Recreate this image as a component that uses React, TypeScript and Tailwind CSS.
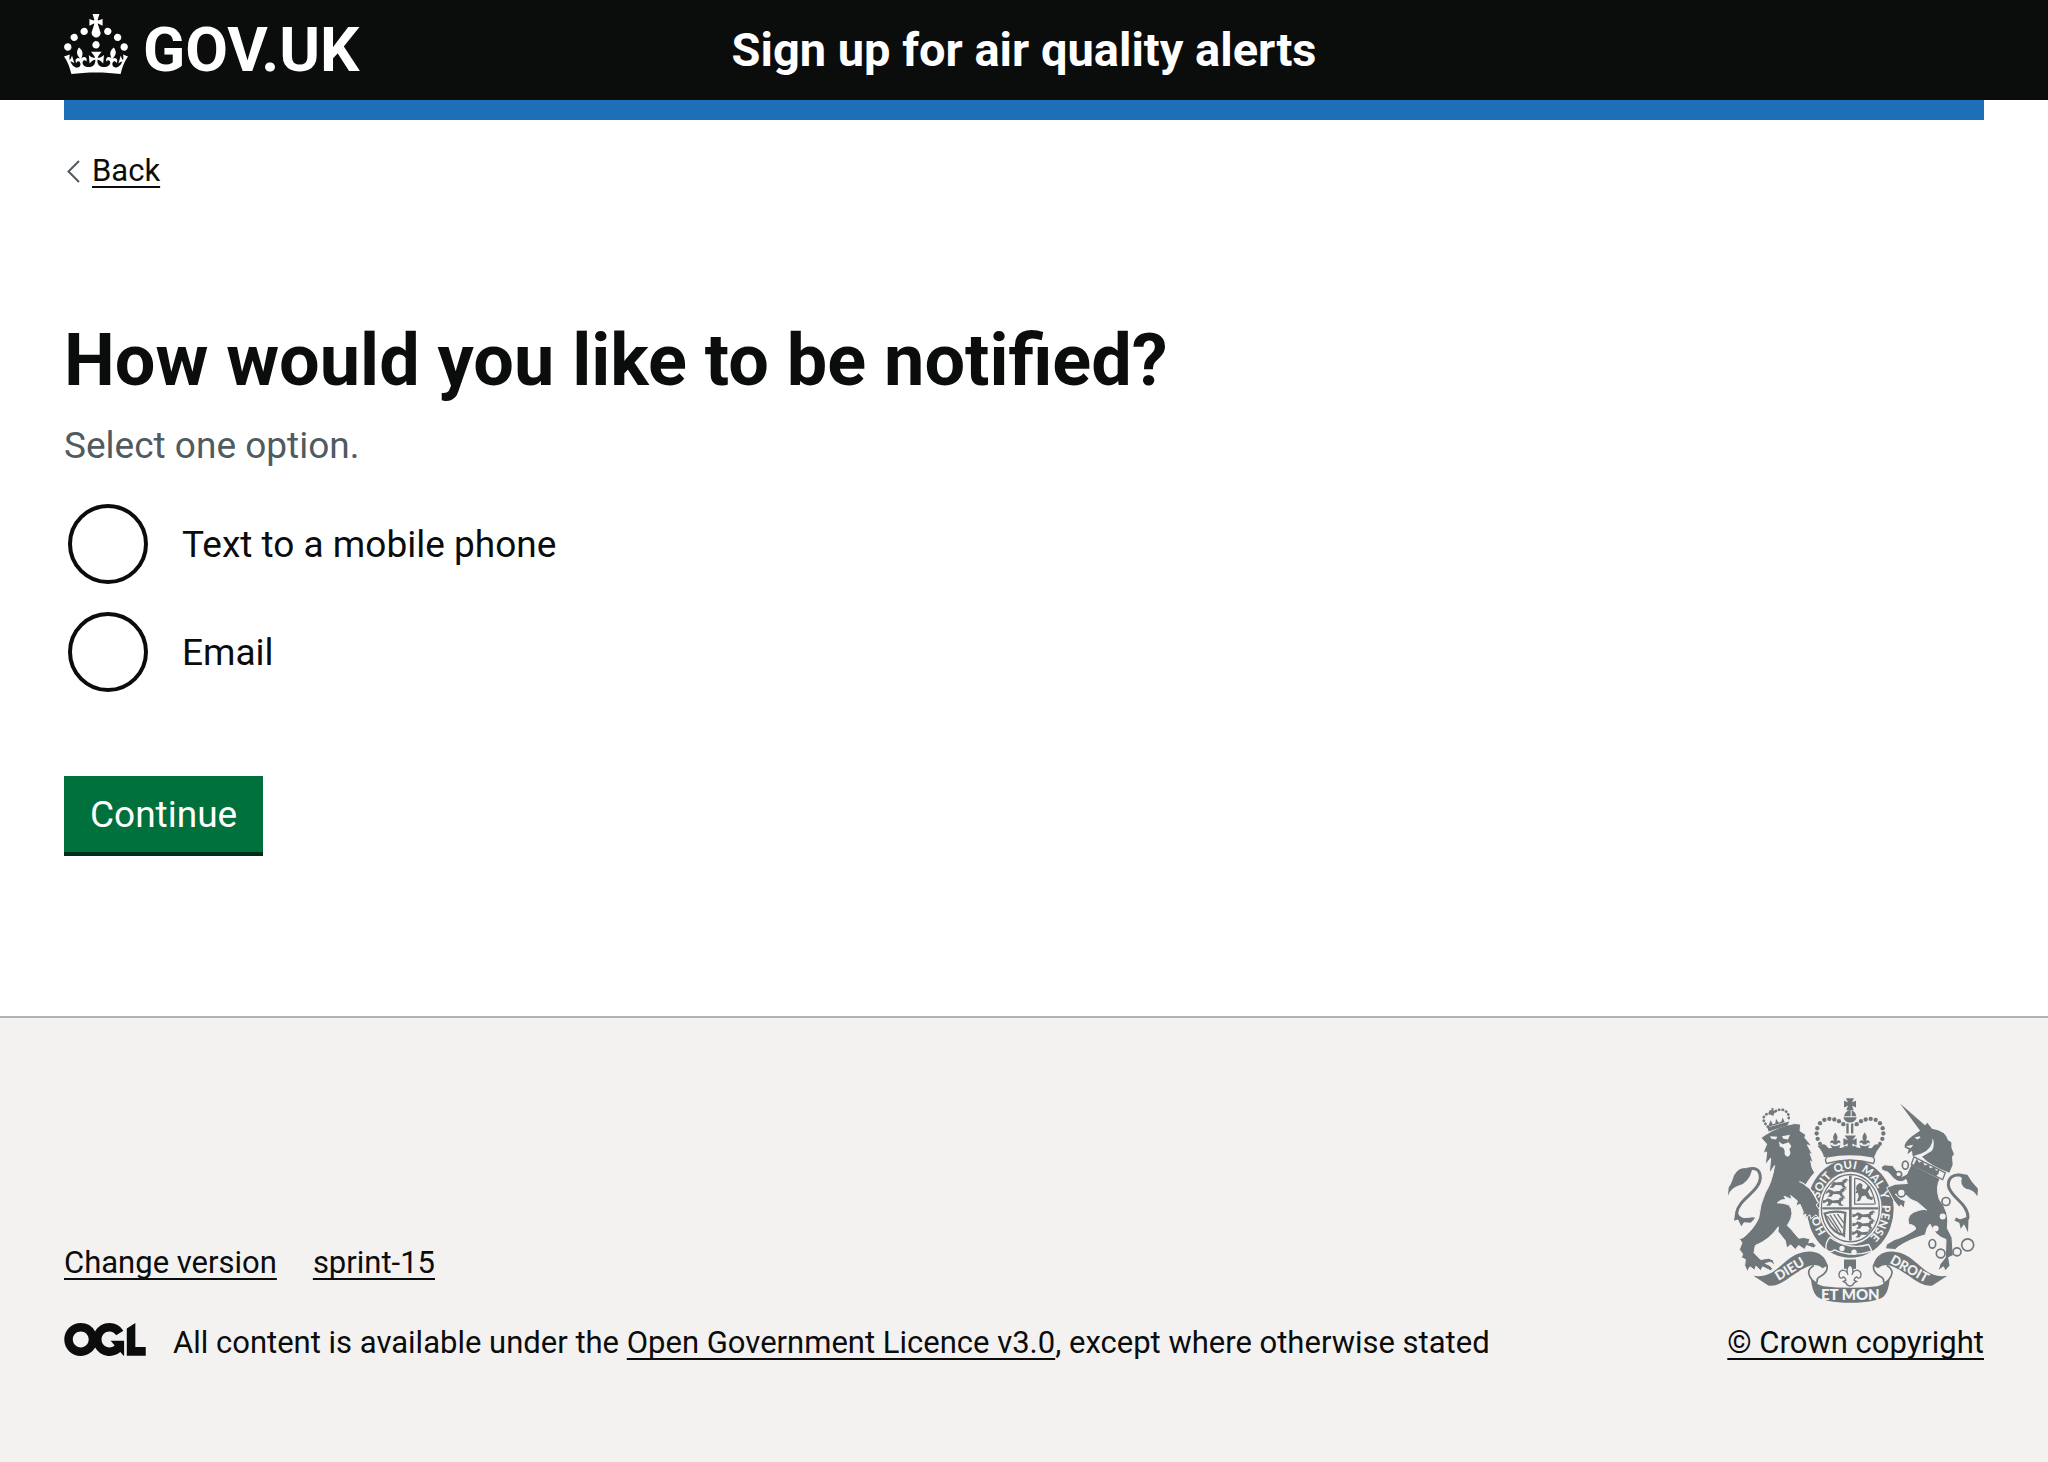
import React from 'react';

const GREY = '#6f777b';
const PAPER = '#f3f2f1';

function Crown() {
  return (
    <svg className="mb-3 h-[60px] w-16 shrink-0" viewBox="0 0 32 30" fill="currentColor" aria-hidden="true">
      <path d="M22.6 10.4c-1 .4-2-.1-2.4-1-.4-.9.1-2 1-2.4.9-.4 2 .1 2.4 1s-.1 2-1 2.4m-5.9 6.7c-.9.4-2-.1-2.4-1-.4-.9.1-2 1-2.4.9-.4 2 .1 2.4 1s-.1 2-1 2.4m10.8-3.7c-1 .4-2-.1-2.4-1-.4-.9.1-2 1-2.4.9-.4 2 .1 2.4 1s0 2-1 2.4m3.3 4.8c-1 .4-2-.1-2.4-1-.4-.9.1-2 1-2.4.9-.4 2 .1 2.4 1s-.1 2-1 2.4M17 4.7l2.3 1.2V2.5l-2.3.7-.2-.2.9-3h-3.4l.9 3-.2.2c-.1.1-2.3-.7-2.3-.7v3.4L15 4.7c.1.1.1.2.2.2l-1.3 4c-.1.2-.1.4-.1.6 0 1.1.8 2 1.9 2.2h.7c1-.2 1.9-1.1 1.9-2.1 0-.2 0-.4-.1-.6l-1.3-4c-.1-.2 0-.2.1-.3m-7.6 5.7c.9.4 2-.1 2.4-1 .4-.9-.1-2-1-2.4-.9-.4-2 .1-2.4 1s0 2 1 2.4m-5 3c.9.4 2-.1 2.4-1 .4-.9-.1-2-1-2.4-.9-.4-2 .1-2.4 1s.1 2 1 2.4m-3.2 4.8c.9.4 2-.1 2.4-1 .4-.9-.1-2-1-2.4-.9-.4-2 .1-2.4 1s0 2 1 2.4m14.8 11c4.4 0 8.6.3 12.3.8 1.1-4.5 2.4-7 3.7-8.8l-2.5-.9c.2 1.3.3 1.9 0 2.7-.4-.4-.8-1.1-1.1-2.3l-1.2 4c.7-.5 1.3-.8 2-.9-1.1 2.5-2.6 3.1-3.5 3-1.1-.2-1.7-1.2-1.5-2.1.3-1.2 1.5-1.5 2.1-.1 1.1-2.3-.8-3-2-2.3 1.9-1.9 2.1-3.5.6-5.6-2.1 1.6-2.1 3.2-1.2 5.5-1.2-1.4-3.2-.6-2.5 1.6.9-1.4 2.1-.5 1.9.8-.2 1.1-1.7 2.1-3.5 1.9-2.7-.2-2.9-2.1-2.9-3.6.7-.1 1.9.5 2.9 1.9l.4-4.3c-1.1 1.1-2.1 1.4-3.2 1.4.4-1.2 2.1-3 2.1-3h-5.4s1.7 1.9 2.1 3c-1.1 0-2.1-.2-3.2-1.4l.4 4.3c1-1.4 2.2-2 2.9-1.9-.1 1.5-.2 3.4-2.9 3.6-1.9.2-3.4-.8-3.5-1.9-.2-1.3 1-2.2 1.9-.8.7-2.3-1.2-3-2.5-1.6.9-2.2.9-3.9-1.2-5.5-1.5 2-1.3 3.7.6 5.6-1.2-.7-3.1 0-2 2.3.6-1.4 1.8-1.1 2.1.1.2.9-.3 1.9-1.5 2.1-.9.2-2.4-.5-3.5-3 .6 0 1.2.3 2 .9l-1.2-4c-.3 1.1-.7 1.9-1.1 2.3-.3-.8-.2-1.4 0-2.7l-2.9.9C1.3 23 2.6 25.5 3.7 30c3.7-.5 7.9-.8 12.3-.8" />
    </svg>
  );
}

function OglLogo() {
  return (
    <svg className="h-[33px] w-[82px] shrink-0" viewBox="0 0 483.2 195.7" fill="currentColor" aria-hidden="true">
      <path d="M421.5 142.8V.1l-50.7 32.3v161.1h112.4v-50.7zm-122.3-9.6A47.12 47.12 0 0 1 221 97.8c0-26 21.1-47.1 47.1-47.1 16.7 0 31.4 8.7 39.7 21.8l42.7-27.2A97.63 97.63 0 0 0 268.1 0c-36.5 0-68.3 20.1-85.1 49.7A98 98 0 0 0 97.8 0C43.9 0 0 43.9 0 97.8s43.9 97.8 97.8 97.8c36.5 0 68.3-20.1 85.1-49.7a97.76 97.76 0 0 0 149.6 25.4l19.4 22.2h3v-87.8h-80l24.3 27.5zM97.8 145c-26 0-47.1-21.1-47.1-47.1s21.1-47.1 47.1-47.1 47.1 21.1 47.1 47.1S123.8 145 97.8 145" />
    </svg>
  );
}

const crownPearls = [
  [323, 160], [320, 144], [322, 128], [330, 113], [343, 103], [358, 100], [373, 102], [387, 107], [400, 116],
];

function CrownHalf() {
  return (
    <>
      {crownPearls.map(([x, y]) => (
        <circle key={`${x}-${y}`} cx={x} cy={y} r="6.5" />
      ))}
      <circle cx="330" cy="175" r="6" />
      {/* fleur-de-lis */}
      <path d="M376 141c7 9 9 16 3 25 8-5 14 0 12 8-3-4-8-3-10 3h-10c-2-6-7-7-10-3-2-8 4-13 12-8-6-9-4-16 3-25z" />
    </>
  );
}

function Ribbon() {
  return (
    <>
      <path d="M130 571Q162 575 186 561C225 536 245 499 298 498Q342 499 353 540L338 548Q322 534 300 541C268 552 240 577 214 592Q194 603 175 600Z" />
      <path
        d="M351 538Q355 560 332 572Q318 578 322 590M312 540Q296 548 296 562Q300 584 322 594"
        fill="none"
        stroke={GREY}
        strokeWidth="5"
      />
    </>
  );
}

/* One walking lion of the English quarters */
function Passant({ x, y }: { x: number; y: number }) {
  return (
    <g transform={`translate(${x} ${y}) scale(1.4 1.2)`}>
      <path d="M4 5l5-5 6 3 5 3 14-2V0l8-4 6 5-6 0 1 4-5 2v7l6 5h-9l-4-6-12-1-5 7h-8l5-6-2-5-8 5-6-3 5-3-5-3z" />
    </g>
  );
}

function RoyalArms() {
  return (
    <svg className="mr-1.5 h-[205px] w-[250px]" viewBox="54 38 750 614" fill={GREY} aria-hidden="true">
      <defs>
        <path id="motto-ring" d="M421 482A105 117 0 0 1 421 249A105 117 0 0 1 421 482" />
        <clipPath id="arms">
          <ellipse cx="421" cy="368" rx="84" ry="98" />
        </clipPath>
      </defs>

      {/* Garter */}
      <ellipse cx="421" cy="369" rx="130" ry="148" />
      <ellipse cx="421" cy="368" rx="94" ry="109" fill={PAPER} />
      <ellipse cx="421" cy="368" rx="87" ry="101" fill="none" stroke={GREY} strokeWidth="4" />
      <g clipPath="url(#arms)">
        <path d="M417 264h8v208h-8zM330 365h182v7H330z" />
        <Passant x={350} y={284} />
        <Passant x={344} y={311} />
        <Passant x={340} y={338} />
        <Passant x={430} y={380} />
        <Passant x={430} y={407} />
        <Passant x={428} y={433} />
        <path d="M434 278v78h60" fill="none" stroke={GREY} strokeWidth="4" />
        <path d="M434 278q50 5 62 78" fill="none" stroke={GREY} strokeWidth="4" />
        <path d="M440 300l10-8 8 6-2 10 10 4 8-12 8 4-8 14 6 14 10 4-4 8-14-4-6-10-10 2-6 14-10 2 6-14-2-12-8 2 4-10-2-6z" />
        <path d="M344 384q30-10 62-2l-4 68q-8-6-12-4-34-14-46-62z" fill="none" stroke={GREY} strokeWidth="7" />
        <path d="M360 388l34 54M371 386l27 42M382 385l20 28M352 392l32 46" fill="none" stroke={GREY} strokeWidth="4" />
      </g>
      <g fill={PAPER} fontFamily="Lato, sans-serif" fontWeight="900" fontSize="34">
        <text>
          <textPath href="#motto-ring" startOffset="13%">HO</textPath>
        </text>
        <text>
          <textPath href="#motto-ring" startOffset="29%">SOIT</textPath>
        </text>
        <text>
          <textPath href="#motto-ring" startOffset="43%">QUI</textPath>
        </text>
        <text>
          <textPath href="#motto-ring" startOffset="55%">MAL</textPath>
        </text>
        <text>
          <textPath href="#motto-ring" startOffset="68%">Y</textPath>
        </text>
        <text>
          <textPath href="#motto-ring" startOffset="74%">PENSE</textPath>
        </text>
      </g>

      {/* Buckle and strap */}
      <path d="M360 455q-14 14-12 36 12 14 26 2 50 24 112 4l-10-20q-52 16-104-14z" stroke={PAPER} strokeWidth="4" />
      <circle cx="396" cy="489" r="8" fill={PAPER} />
      <circle cx="432" cy="500" r="8" fill={PAPER} />

      {/* Crown */}
      <CrownHalf />
      <g transform="matrix(-1 0 0 1 840 0)">
        <CrownHalf />
      </g>
      <path d="M408 38h24l-6 12 12-4v20l-12-5 5 13h-22l5-13-12 5V46l12 4z" />
      <path d="M417 74h5v18h-20q3-14 15-18zM425 74q12 4 14 18h-14zM400 95h40q-3 15-20 16-17-1-20-16z" />
      <path d="M409 114h7v30h-7zM423 114h7v30h-7z" />
      <path d="M404 150h34l-11 14 13-6v22l-14-6 4 16h-20l4-16-14 6v-22l14 6z" />
      <path d="M328 181q10-9 20-2 6 12 18 8l-6-10q16 10 32 0l-4 10q12 2 18-7 14 12 28 0 6 9 18 7l-4-10q16 10 32 0l-6 10q12 4 18-8 10-7 20 2-14 16-20 34-75-16-150 0-4-18-20-34z" />
      <path d="M352 214q68-14 136 0 10 8 2 20-70-22-140 0-8-12 2-20z" fill={PAPER} stroke={GREY} strokeWidth="4" />

      {/* Lion */}
      <path
        stroke={PAPER}
        strokeWidth="3"
        d="M166 148L153 157L170 176L160 200L170 200L166 238L182 218L178 264L194 240Q186 290 166 322Q150 356 146 398Q130 432 100 456L88 460L96 472L88 492L98 506L94 516L106 522L104 540L112 558L120 544L134 554L138 542L152 556L158 544L182 556L188 550L180 540L166 534L182 530L194 540L190 524L176 518L152 522L132 502L136 480Q180 462 205 424L204 438L226 466L230 488L242 478L256 492L266 480L284 492L290 480L312 488L318 480L308 470L296 472L300 460L282 456L266 458L244 432L232 420Q258 380 236 358Q220 352 202 352Q212 340 228 342L222 332L246 342L242 330L262 346L258 362L270 356L280 380L276 390L288 386L284 398L300 388L302 400L318 388L328 400L328 372L318 358L326 352L308 322Q300 304 286 300Q306 268 314 262Q304 248 302 226L310 232L300 204L308 208L292 178L306 182L284 156L288 148L270 136L272 116L254 114Q204 122 166 148Z"
      />
      <path d="M268 288Q298 300 312 326L324 350" fill="none" stroke={PAPER} strokeWidth="4" />
      <path d="M180 152l22 2-4 8-14-2zM216 152l24-4-6 14-14-2zM206 168l12 8 18-6 8 12-6 10q8 14-4 22-12-2-10-16 0-12-14-14z" fill={PAPER} />
      {/* Lion's crown */}
      <path d="M172 126l66-18-6 12-56 18zM182 104l6 12 8-2 2-14 8 12 8-4 4-12 6 14-50 14z" />
      <path d="M178 74l7 0-1-7 7 2-1 7 7 0v6l-7 0 1 8-7 0-1-8-6 0z" />
      <path d="M174 124q-20-20-10-34 12-10 24-4M188 84q16-16 34-10 20 10 12 34" fill="none" stroke={GREY} strokeWidth="8" strokeDasharray="1 10" strokeLinecap="round" />
      {/* Lion's tail */}
      <path d="M110 252Q150 240 151 276C150 318 86 340 80 382Q84 410 130 400" fill="none" stroke={GREY} strokeWidth="9" />
      <path d="M54 330L56 306Q64 296 72 270Q86 246 108 248L126 254Q116 292 86 300Q64 306 54 330ZM76 380L72 406L84 402L94 422L102 410L122 412L136 396L96 398Z" />

      {/* Unicorn */}
      <path d="M570 54L650 124L632 138Z" />
      <path d="M652 112L666 130Q706 136 714 164L724 170L724 186L732 206L726 214L728 238L718 262Q660 240 636 214L666 196Q676 176 668 158Q668 190 634 204L608 212L606 196L592 206L596 192L584 186Q580 172 606 152L632 134Z" />
      <path d="M614 156l14-4 4 4-10 6zM588 182l22-4-8 10z" fill={PAPER} />
      <path
        stroke={PAPER}
        strokeWidth="3"
        d="M604 236L690 280Q676 306 688 342Q720 380 712 428L726 456L730 510L716 516L720 540L706 556L700 544L684 556L690 536L706 516L708 462Q676 452 660 416Q650 424 646 448Q596 462 562 486L556 492L526 490L530 476L554 462Q580 456 616 432Q620 420 596 416Q586 384 628 374Q646 370 650 374L622 350Q600 344 590 330L556 326L570 340L586 346L582 368L572 358L568 366L552 346L530 306L556 296L592 294L588 282Q570 296 552 280L534 260L516 254L514 244L524 238L548 240L574 274L590 266Z"
      />
      <path d="M612 214L706 262L698 282L604 236Z" fill={PAPER} stroke={GREY} strokeWidth="4" />
      <path d="M620 220l8 12 10-6 6 14 12-4 4 12 14-4 4 12 10-4-2 12-8 8-68-32z" />
      <g fill="none" stroke={GREY} strokeWidth="5">
        <ellipse cx="586" cy="239" rx="9" ry="12" />
        <ellipse cx="566" cy="266" rx="9" ry="8" fill={PAPER} />
        <circle cx="574" cy="322" r="12" fill={PAPER} />
        <circle cx="708" cy="348" r="12" fill={PAPER} />
        <ellipse cx="667" cy="475" rx="10" ry="13" />
        <circle cx="692" cy="504" r="13" />
        <circle cx="741" cy="499" r="12" />
        <circle cx="773" cy="478" r="18" />
      </g>
      <circle cx="698" cy="393" r="9" fill={PAPER} />
      <circle cx="677" cy="429" r="9" fill={PAPER} />
      {/* Unicorn's tail */}
      <path d="M760 270Q714 262 715 300C720 336 774 352 774 396Q766 416 736 400" fill="none" stroke={GREY} strokeWidth="9" />
      <path d="M742 264L772 268Q784 290 804 310L802 332Q790 312 768 310Q748 296 756 278ZM732 404L748 412L752 430L762 416L774 440L776 392L744 404Z" />

      {/* Ribbon */}
      <Ribbon />
      <g transform="matrix(-1 0 0 1 842 0)">
        <Ribbon />
      </g>
      <path d="M302 574Q312 596 340 602Q421 612 502 602Q530 596 540 574Q536 620 522 632Q500 650 421 652Q342 650 320 632Q306 620 302 574Z" />
      <g fill={PAPER} fontFamily="Lato, sans-serif" fontWeight="900" textAnchor="middle" fontSize="40">
        <text transform="translate(246 562) rotate(-31)">DIEU</text>
        <text transform="translate(592 562) rotate(29)">DROIT</text>
        <text x="421" y="642" fontSize="45">ET MON</text>
      </g>

      {/* Badge */}
      <path d="M402 522h36v28h-36z" />
      <path
        d="M420 536q14 14 6 32 4-14 16-14 14 4 10 20-6 8-12 0-6 2-8 10l8 4-8 4q-2 8-12 10-10-2-12-10l-8-4 8-4q-2-8-8-10-6 8-12 0-4-16 10-20 12 0 16 14-8-18 6-32z"
        fill={PAPER}
        stroke={GREY}
        strokeWidth="4"
      />
    </svg>
  );
}

function RadioOption({ id, label }: { id: string; label: string }) {
  return (
    <div className="flex items-center gap-[34px] pl-1">
      <input
        id={id}
        type="radio"
        name="notify"
        value={id}
        className="size-20 shrink-0 appearance-none rounded-full border-4 border-[#0b0c0c] bg-white checked:bg-[radial-gradient(circle,#0b0c0c_18px,white_19px)]"
      />
      <label htmlFor={id} className="pt-0.5 text-[37px] leading-[48px]">
        {label}
      </label>
    </div>
  );
}

const link = 'underline decoration-2 underline-offset-[5px] [text-decoration-skip-ink:none]';

export default function App() {
  return (
    <div className="flex min-h-screen flex-col bg-white font-[Roboto,'Liberation_Sans',sans-serif] text-[#0b0c0c]">
      <header>
        <div className="grid h-[100px] grid-cols-[1fr_auto_1fr] items-center bg-[#0b0c0c] px-16 text-white">
          <a href="#home" className="flex items-center gap-[15px]">
            <Crown />
            <span className="text-[62px] leading-[72px] font-bold">GOV.UK</span>
          </a>
          <a href="#service" className="text-[47px] leading-[56px] font-bold">
            Sign up for air quality alerts
          </a>
        </div>
        <div className="mx-16 h-5 bg-[#1d70b8]" />
      </header>

      <div className="px-16 pt-[31px]">
        <a href="#back" className="inline-flex items-center gap-3 pl-[3px] align-top text-[31px] leading-10">
          <svg className="h-[23px] w-[13px]" viewBox="0 0 13 23" fill="none" stroke="#505a5f" strokeWidth="2" aria-hidden="true">
            <path d="M12 1L1.500 11.500L12 22" />
          </svg>
          <span className={link}>Back</span>
        </a>

        <main className="pt-[132px] pb-40">
          <form onSubmit={(e: React.FormEvent) => e.preventDefault()}>
            <fieldset aria-describedby="notify-hint">
              <legend>
                <h1 className="text-[72px] leading-[76px] font-bold">How would you like to be notified?</h1>
              </legend>
              <p id="notify-hint" className="mt-[23px] text-[37px] leading-[48px] text-[#505a5f]">
                Select one option.
              </p>
              <div className="mt-[34px] flex flex-col gap-7">
                <RadioOption id="text" label="Text to a mobile phone" />
                <RadioOption id="email" label="Email" />
              </div>
            </fieldset>
            <button
              type="submit"
              className="mt-[84px] block h-20 border-b-4 border-[#002d18] bg-[#00703c] px-[26px] pt-0.5 text-[37px] leading-[48px] text-white"
            >
              Continue
            </button>
          </form>
        </main>
      </div>

      <footer className="grow border-t-2 border-[#b1b4b6] bg-[#f3f2f1] px-16 pt-20 pb-[100px] text-[31px] leading-10">
        <div className="flex items-end justify-between gap-16">
          <div className="flex flex-col gap-10">
            <ul className="flex gap-9">
              <li>
                <a href="#version" className={link}>Change version</a>
              </li>
              <li>
                <a href="#sprint-15" className={link}>sprint-15</a>
              </li>
            </ul>
            <div className="flex items-start gap-[27px]">
              <OglLogo />
              <p>
                All content is available under the{' '}
                <a href="#licence" className={link}>Open Government Licence v3.0</a>, except where otherwise stated
              </p>
            </div>
          </div>
          <div className="flex shrink-0 flex-col items-end gap-5">
            <RoyalArms />
            <a href="#copyright" className={link}>© Crown copyright</a>
          </div>
        </div>
      </footer>
    </div>
  );
}
